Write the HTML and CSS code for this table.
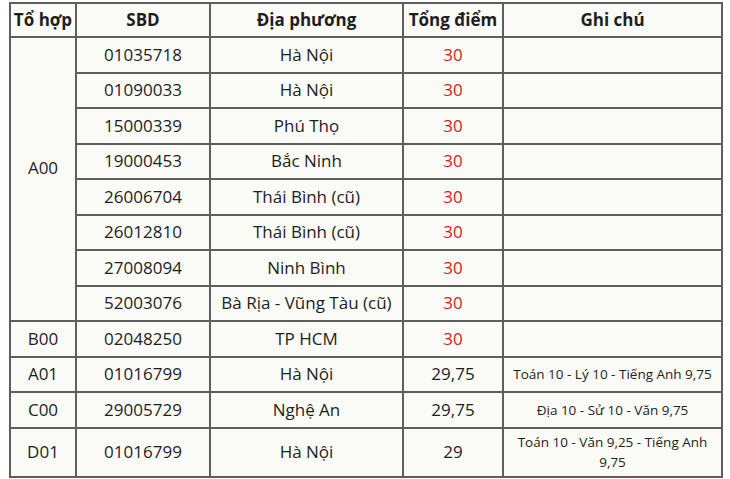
FILE: index.html
```html
<!DOCTYPE html>
<html lang="vi">
<head>
<meta charset="utf-8">
<link rel="stylesheet" href="styles.css">
</head>
<body>
<table class="scores">
  <colgroup>
    <col class="c1"><col class="c2"><col class="c3"><col class="c4"><col class="c5">
  </colgroup>
  <thead>
    <tr><th>Tổ hợp</th><th>SBD</th><th>Địa phương</th><th>Tổng điểm</th><th>Ghi chú</th></tr>
  </thead>
  <tbody>
    <tr><td rowspan="8" class="group">A00</td><td>01035718</td><td>Hà Nội</td><td class="red">30</td><td></td></tr>
    <tr><td>01090033</td><td>Hà Nội</td><td class="red">30</td><td></td></tr>
    <tr><td>15000339</td><td>Phú Thọ</td><td class="red">30</td><td></td></tr>
    <tr><td>19000453</td><td>Bắc Ninh</td><td class="red">30</td><td></td></tr>
    <tr><td>26006704</td><td>Thái Bình (cũ)</td><td class="red">30</td><td></td></tr>
    <tr><td>26012810</td><td>Thái Bình (cũ)</td><td class="red">30</td><td></td></tr>
    <tr><td>27008094</td><td>Ninh Bình</td><td class="red">30</td><td></td></tr>
    <tr><td>52003076</td><td>Bà Rịa - Vũng Tàu (cũ)</td><td class="red">30</td><td></td></tr>
    <tr><td>B00</td><td>02048250</td><td>TP HCM</td><td class="red">30</td><td></td></tr>
    <tr><td>A01</td><td>01016799</td><td>Hà Nội</td><td>29,75</td><td class="note">Toán 10 - Lý 10 - Tiếng Anh 9,75</td></tr>
    <tr><td>C00</td><td>29005729</td><td>Nghệ An</td><td>29,75</td><td class="note">Địa 10 - Sử 10 - Văn 9,75</td></tr>
    <tr class="tall"><td>D01</td><td>01016799</td><td>Hà Nội</td><td>29</td><td class="note">Toán 10 - Văn 9,25 - Tiếng Anh 9,75</td></tr>
  </tbody>
</table>
</body>
</html>
```
FILE: styles.css
```css
html, body {
  margin: 0;
  padding: 0;
  background: #ffffff;
}
body {
  padding: 2px 0 0 9px;
}
.scores {
  border-collapse: collapse;
  table-layout: fixed;
  width: 712px;
  background: #fafaf6;
  font-family: "Open Sans", "Liberation Sans", sans-serif;
  font-size: 17px;
  color: #1e1e1e;
}
.c1 { width: 66px; }
.c2 { width: 134px; }
.c3 { width: 193px; }
.c4 { width: 100px; }
.c5 { width: 219px; }
.scores th, .scores td {
  border: 2px solid #5e5e5e;
  text-align: center;
  vertical-align: middle;
  padding: 0 2px;
  height: 33.5px;
  line-height: 20px;
}
.scores th {
  font-weight: 700;
  height: 32px;
  white-space: nowrap;
}
.scores td.group {
  padding-bottom: 22px;
}
.scores td.red {
  color: #d61a1a;
}
.scores td.note {
  font-size: 13.5px;
  line-height: 20px;
  padding: 0 6px;
}
.scores tr.tall td {
  height: 47px;
}
```
